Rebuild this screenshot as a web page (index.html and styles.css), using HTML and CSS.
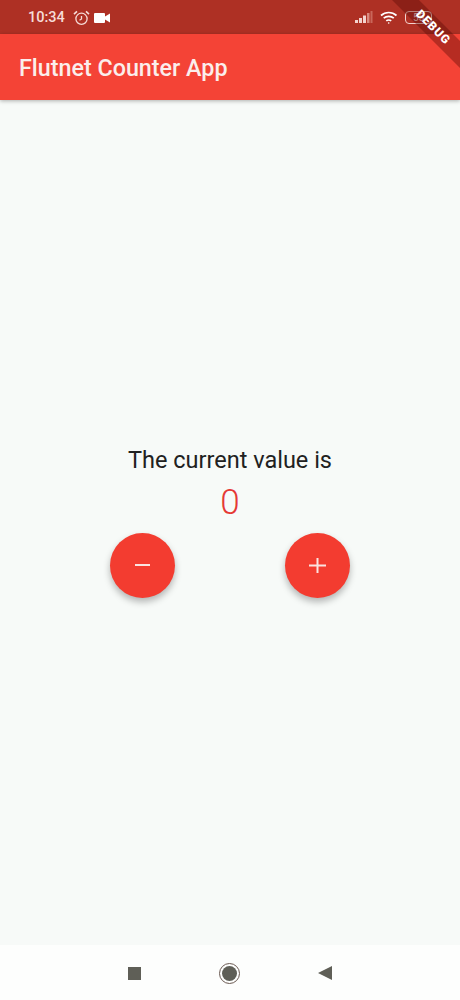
FILE: index.html
```html
<!DOCTYPE html>
<html lang="en">
<head>
<meta charset="UTF-8">
<meta name="viewport" content="width=device-width, initial-scale=1.0">
<title>Flutnet Counter App</title>
<link rel="stylesheet" href="styles.css">
</head>
<body>
<div class="phone">
    <div class="status-bar">
        <div class="status-left">
            <span class="clock">10:34</span>
            <svg class="alarm" width="17" height="16" viewBox="0 0 17 16" fill="none" stroke="#f6dcd8" stroke-width="1.3">
                <circle cx="8.5" cy="8.8" r="5.6"/>
                <path d="M8.5 6v3l-2 1.2"/>
                <path d="M1 4.200 4 1.400M16 4.200 13 1.400" stroke-width="1.6"/>
            </svg>
            <svg class="camera" width="16" height="10" viewBox="0 0 16 10" fill="#fff">
                <rect x="0" y="0" width="11" height="10" rx="1"/>
                <path d="M11 3.500 16 .5v9l-5-3z"/>
            </svg>
        </div>
        <div class="status-right">
            <svg width="18" height="13" viewBox="0 0 18 13">
                <rect x="0" y="9" width="3" height="3" fill="#f3d3ce"/>
                <rect x="4" y="7" width="3" height="5" fill="#f3d3ce"/>
                <rect x="8" y="4.500" width="3" height="7.500" fill="#f3d3ce"/>
                <rect x="12" y="2" width="2.500" height="10" fill="#d98a7f"/>
                <rect x="15.500" y="0" width="2" height="12" fill="#c9675a"/>
            </svg>
            <svg width="18" height="14" viewBox="0 0 18 14" fill="none" stroke="#fff" stroke-width="1.7">
                <path d="M1 4.500C5.500.5 12 .5 16.500 4.500"/>
                <path d="M3.700 7.200C6.500 4.800 11 4.800 13.800 7.200"/>
                <path d="M6.300 9.800C7.500 8.800 10 8.800 11.200 9.800"/>
                <circle cx="8.700" cy="12" r=".8" fill="#fff" stroke="none"/>
            </svg>
            <div class="battery"><span class="battery-level">55</span></div>
        </div>
    </div>
    <header class="app-bar">
        <h1>Flutnet Counter App</h1>
    </header>
    <main class="content">
        <p class="label">The current value is</p>
        <p class="value">0</p>
        <div class="buttons">
            <button class="fab">
                <svg width="15" height="16" viewBox="0 0 15 16" stroke="#fbe3e0" stroke-width="2"><path d="M0 8h15"/></svg>
            </button>
            <button class="fab">
                <svg width="17" height="17" viewBox="0 0 17 17" stroke="#fbe3e0" stroke-width="2"><path d="M0 8.500h17M8.500 1v15"/></svg>
            </button>
        </div>
    </main>
    <nav class="nav-bar">
        <span class="nav-square"></span>
        <span class="nav-circle"><span class="nav-dot"></span></span>
        <span class="nav-back"></span>
    </nav>
    <div class="debug-banner">DEBUG</div>
</div>
</body>
</html>
```

FILE: styles.css
```css
* {
    box-sizing: border-box;
}
body {
    margin: 0;
    padding: 0;
    font-family: Roboto, sans-serif;
    background: #f7faf8;
}
.phone {
    position: relative;
    width: 460px;
    height: 1000px;
    display: flex;
    flex-direction: column;
    overflow: hidden;
}
.status-bar {
    height: 34px;
    flex: none;
    display: flex;
    justify-content: space-between;
    align-items: center;
    padding: 1px 28px 0 28px;
    background: #ae3024;
}
.status-left, .status-right {
    display: flex;
    align-items: center;
}
.status-right {
    gap: 7px;
}
.clock {
    font-size: 14.500px;
    font-weight: 500;
    color: #f6dcd8;
    margin-right: 8px;
}
.camera {
    margin-left: 4px;
}
.battery {
    width: 27px;
    height: 13px;
    border: 1px solid #f3d3ce;
    border-radius: 4px;
    display: flex;
    align-items: center;
    justify-content: center;
}
.battery-level {
    font-size: 10px;
    color: #f6dcd8;
}
.app-bar {
    height: 66px;
    flex: none;
    display: flex;
    align-items: center;
    padding: 2px 19px 0;
    background: #f44336;
    box-shadow: 0 1px 4px rgba(0,0,0,0.3);
    z-index: 1;
}
.app-bar h1 {
    margin: 0;
    font-size: 23.300px;
    font-weight: 500;
    color: #fbeeec;
}
.content {
    flex: 1;
    display: flex;
    flex-direction: column;
    align-items: center;
    justify-content: center;
    padding-bottom: 1px;
}
.label {
    margin: 0;
    font-size: 23.500px;
    line-height: 26px;
    color: #212121;
}
.value {
    margin: 11px 0 0;
    font-size: 35px;
    font-weight: 300;
    line-height: 38px;
    color: #e53935;
}
.buttons {
    display: flex;
    gap: 110px;
    margin-top: 11px;
}
.fab {
    width: 65px;
    height: 65px;
    padding: 0;
    border: none;
    border-radius: 50%;
    display: flex;
    align-items: center;
    justify-content: center;
    background: #f33c30;
    box-shadow: 0 4px 7px rgba(0,0,0,0.28);
}
.nav-bar {
    height: 55px;
    flex: none;
    display: flex;
    justify-content: center;
    align-items: center;
    gap: 78px;
    padding-top: 1px;
    background: #fdfefd;
}
.nav-square {
    width: 13px;
    height: 13px;
    background: #5f5f57;
}
.nav-circle {
    width: 21px;
    height: 21px;
    border: 1px solid #6b5a52;
    border-radius: 50%;
    display: flex;
    align-items: center;
    justify-content: center;
}
.nav-dot {
    width: 15px;
    height: 15px;
    border-radius: 50%;
    background: #5f5f57;
}
.nav-back {
    width: 0;
    height: 0;
    border-style: solid;
    border-width: 7.500px 14px 7.500px 0;
    border-color: transparent #5f5f57 transparent transparent;
}
/* ribbon sits over the corner of the status bar */
.debug-banner {
    position: absolute;
    top: 18px;
    right: -33px;
    width: 120px;
    height: 19px;
    line-height: 19px;
    text-align: center;
    font-size: 12px;
    font-weight: 900;
    letter-spacing: 1px;
    color: #fff;
    background: rgba(90,10,5,0.4);
    transform: rotate(45deg);
    z-index: 2;
}
```
